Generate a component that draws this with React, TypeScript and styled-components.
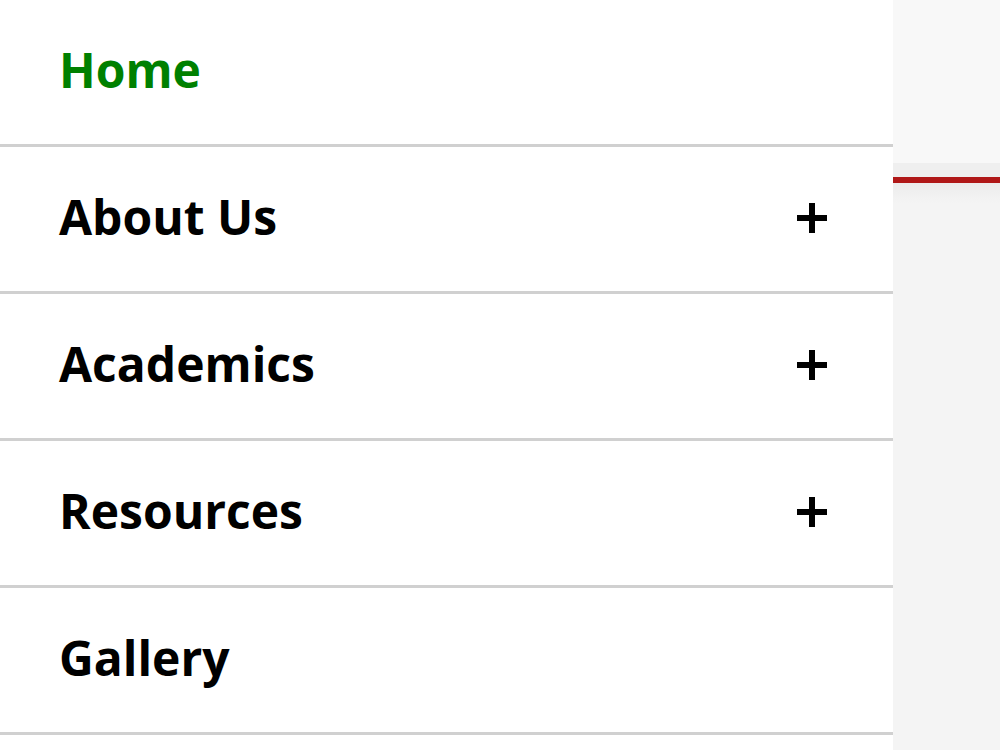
import styled, { createGlobalStyle } from "styled-components";

const GlobalStyle = createGlobalStyle`
  html, body {
    margin: 0;
    padding: 0;
    overflow: hidden;
  }
  body {
    font-family: "Open Sans", "Noto Sans", sans-serif;
  }
`;

const menu = [
  { label: "Home", active: true, sub: false },
  { label: "About Us", sub: true },
  { label: "Academics", sub: true },
  { label: "Resources", sub: true },
  { label: "Gallery", sub: false },
];

const PlusIcon = () => (
  <svg width="30" height="30" viewBox="0 0 30 30">
    <rect x="12" y="0" width="6" height="30" fill="#000" />
    <rect x="0" y="12" width="30" height="6" fill="#000" />
  </svg>
);

const App = () => {
  return (
    <Page>
      <GlobalStyle />
      <Sidebar>
        {menu.map((item) => (
          <MenuRow key={item.label}>
            <MenuLabel active={item.active}>{item.label}</MenuLabel>
            {item.sub && (
              <ToggleButton>
                <PlusIcon />
              </ToggleButton>
            )}
          </MenuRow>
        ))}
      </Sidebar>
      <Backdrop>
        <Header />
        <NavBar />
        <AccentLine />
        <Content />
      </Backdrop>
    </Page>
  );
};

const Page = styled.div`
  display: flex;
  width: 1000px;
  height: 750px;
  background: #f4f4f4;
`;

const Sidebar = styled.nav`
  display: flex;
  flex-direction: column;
  width: 893px;
  flex-shrink: 0;
  height: 750px;
  background: #ffffff;
`;

const MenuRow = styled.div`
  display: flex;
  align-items: center;
  justify-content: space-between;
  flex-shrink: 0;
  height: 144px;
  padding: 0 66px 0 59px;
  border-bottom: 3px solid #d0d0d0;
`;

const MenuLabel = styled.span<{ active?: boolean }>`
  font-family: "Open Sans", "Noto Sans", sans-serif;
  font-size: 48px;
  font-weight: 700;
  color: ${({ active }) => (active ? "#008000" : "#000000")};
  margin-top: -5px;
`;

const ToggleButton = styled.span`
  display: flex;
  width: 30px;
  height: 30px;
  margin-top: -3px;
`;

const Backdrop = styled.div`
  display: flex;
  flex-direction: column;
  flex: 1;
`;

const Header = styled.div`
  height: 163px;
  background: #f8f8f8;
`;

const NavBar = styled.div`
  height: 14px;
  background: #efefef;
`;

const AccentLine = styled.div`
  height: 6px;
  background: #b01818;
`;

const Content = styled.div`
  flex: 1;
  background: linear-gradient(#ececec, #f4f4f4 20px);
`;

export default App;
